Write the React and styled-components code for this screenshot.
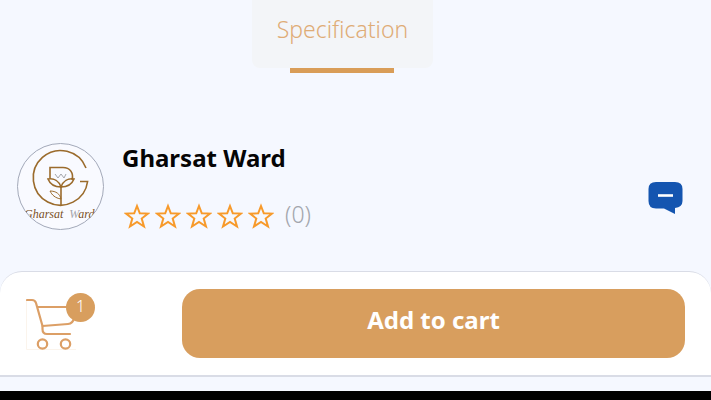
import React from "react"
import styled, { createGlobalStyle } from "styled-components";

const GlobalStyle = createGlobalStyle`
  * {
    box-sizing: border-box;
  }
  body {
    margin: 0;
    background: #f5f8ff;
    font-family: "Noto Sans", "Open Sans", sans-serif;
  }
  button {
    font-family: inherit;
    border: none;
    cursor: pointer;
  }
`;

const Page = styled.div`
  min-height: 100vh;
  display: flex;
  flex-direction: column;
`;

const Tabs = styled.nav`
  display: flex;
  justify-content: center;
  padding-right: 26px;
`;

const Tab = styled.button`
  display: flex;
  flex-direction: column;
  align-items: center;
  padding: 0;
  background: none;
  color: #dfac76;
  font-size: 23px;
  font-weight: 300;
  line-height: 28px;
`;

const TabLabel = styled.span`
  padding: 15px 25px 25px;
  border-radius: 0 0 8px 8px;
  background: #f3f5f8;
`;

const TabLine = styled.span`
  width: 104px;
  height: 5px;
  background: #d99d58;
`;

const Seller = styled.section`
  display: flex;
  align-items: center;
  gap: 18px;
  margin-top: 69px;
  padding: 0 28px 0 17px;
`;

const SellerInfo = styled.div`
  flex: 1;
  display: flex;
  flex-direction: column;
  gap: 28px;
`;

const SellerName = styled.h2`
  margin: 0;
  color: #050505;
  font-size: 24px;
  font-weight: 700;
  line-height: 32px;
`;

const Rating = styled.div`
  display: flex;
  align-items: center;
  gap: 5px;
  padding-left: 2px;
`;

const Count = styled.span`
  margin-left: 6px;
  padding-bottom: 4px;
  color: #a3a6ad;
  font-size: 23px;
  font-weight: 300;
  line-height: 24px;
`;

const ChatButton = styled.button`
  display: flex;
  margin-top: 24px;
  padding: 0;
  background: none;
`;

const BuyBar = styled.footer`
  display: flex;
  align-items: center;
  margin-top: auto;
  padding: 17px 26px;
  border: solid #d9dce6;
  border-width: 1px 0 2px;
  border-radius: 22px 22px 0 0;
  background: #fff;
`;

const CartButton = styled.button`
  position: relative;
  display: flex;
  flex: none;
  margin-right: 104px;
  padding: 0;
  background: none;
`;

const Badge = styled.span`
  position: absolute;
  top: -5px;
  left: 40px;
  width: 29px;
  height: 29px;
  border-radius: 50%;
  background: #d89e5e;
  color: #fff;
  font-size: 16px;
  font-weight: 300;
  line-height: 26px;
  text-align: center;
`;

const AddButton = styled.button`
  flex: 1;
  height: 69px;
  padding: 0 0 8px;
  border-radius: 18px;
  background: #d89e5e;
  color: #fff;
  font-size: 24px;
  font-weight: 700;
  line-height: 32px;
`;

const SystemBar = styled.div`
  height: 9px;
  margin-top: 14px;
  background: #000;
`;

function SellerLogo() {
  return (
    <svg width="87" height="87" viewBox="0 0 87 87" role="img" aria-label="Gharsat Ward logo">
      <clipPath id="logo-circle">
        <circle cx="43.5" cy="43.5" r="43" />
      </clipPath>
      <circle cx="43.5" cy="43.5" r="43" fill="#f9faff" stroke="#a3a9b9" strokeWidth="1" />
      <g fill="none" stroke="#9b6b2c" strokeWidth="1.6">
        <path d="M69 25 A27.300 27.300 0 1 0 70.600 38.500 H63" />
        <path d="M33 35 V24.500 H46 C53 24.500 57 30 55 37" />
        <path d="M31 36 C37 35 42 38 44 44 C37 44 33 41 31 36 Z" />
        <path d="M57 36 C51 35 46 38 44 44 C51 44 55 41 57 36 Z" />
        <path d="M44 43 V62" />
        <path d="M33 48 C39 48 43 51 44 56 C38 55 35 52 33 48" strokeWidth="1" />
        <path d="M38 31 L41 35 L44 31 L47 35 L49 31" stroke="#a5a6ac" strokeWidth="1" />
      </g>
      <g clipPath="url(#logo-circle)">
        <text x="7" y="75" fill="#79501f" fontFamily="Liberation Serif" fontSize="12" fontStyle="italic">
          Gharsat&#160; <tspan fill="#a5a6ac">W</tspan>ard
        </text>
      </g>
    </svg>
  )
}

function Star() {
  return (
    <svg width="26" height="26" viewBox="0 0 26 26" aria-hidden="true">
      <path
        d="M13 3 L15.800 10.300 L24 10.600 L17.700 15.500 L20 23.500 L13 19 L6 23.500 L8.300 15.500 L2 10.600 L10.200 10.300 Z"
        fill="none"
        stroke="#f79a2b"
        strokeWidth="2"
      />
    </svg>
  )
}

function ChatIcon() {
  return (
    <svg width="35" height="34" viewBox="0 0 35 34" aria-hidden="true">
      <path
        d="M8 1 H27 Q34.500 1 34.500 8 V20 Q34.500 26 27 27 V33 L16 27.500 H8 Q0.500 27.500 0.500 20 V8 Q0.500 1 8 1 Z"
        fill="#1455b0"
      />
      <path d="M10 14.500 H25" stroke="#fff" strokeWidth="2.600" />
    </svg>
  )
}

function CartIcon() {
  return (
    <svg width="52" height="52" viewBox="0 0 52 52" aria-hidden="true">
      <path d="M0.500 3 V51.500 H50" fill="none" stroke="#fbf4ec" />
      <g fill="none" stroke="#dc9f66" strokeWidth="2.200" strokeLinecap="round" strokeLinejoin="round">
        <path d="M1 2 H6 Q9 2 10 5 L16.500 28 L42 26 Q47 25.500 48 20 L51 9 H12" />
        <path d="M16.500 28 V31 Q16.500 36 21 36 H44" />
        <circle cx="16.500" cy="46" r="4.700" />
        <circle cx="39.500" cy="46" r="4.700" />
      </g>
    </svg>
  )
}

function App() {
  const stars = [1, 2, 3, 4, 5];

  return (
    <Page>
      <GlobalStyle />
      <Tabs>
        <Tab type="button">
          <TabLabel>Specification</TabLabel>
          <TabLine />
        </Tab>
      </Tabs>

      <Seller>
        <SellerLogo />
        <SellerInfo>
          <SellerName>Gharsat Ward</SellerName>
          <Rating>
            {stars.map((star) => <Star key={star} />)}
            <Count>(0)</Count>
          </Rating>
        </SellerInfo>
        <ChatButton type="button" aria-label="Chat">
          <ChatIcon />
        </ChatButton>
      </Seller>

      <BuyBar>
        <CartButton type="button" aria-label="Cart">
          <CartIcon />
          <Badge>1</Badge>
        </CartButton>
        <AddButton type="button">Add to cart</AddButton>
      </BuyBar>
      <SystemBar />
    </Page>
  )
}

export default App;
